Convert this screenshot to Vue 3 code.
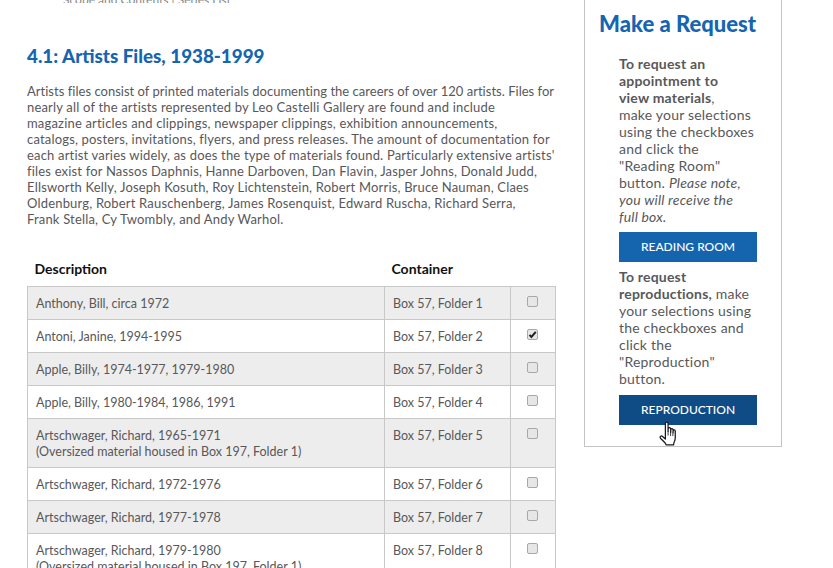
<script setup>
const rows = [
  { desc: 'Anthony, Bill, circa 1972', folder: 'Box 57, Folder 1' },
  { desc: 'Antoni, Janine, 1994-1995', folder: 'Box 57, Folder 2', checked: true },
  { desc: 'Apple, Billy, 1974-1977, 1979-1980', folder: 'Box 57, Folder 3' },
  { desc: 'Apple, Billy, 1980-1984, 1986, 1991', folder: 'Box 57, Folder 4' },
  { desc: 'Artschwager, Richard, 1965-1971', note: '(Oversized material housed in Box 197, Folder 1)', folder: 'Box 57, Folder 5' },
  { desc: 'Artschwager, Richard, 1972-1976', folder: 'Box 57, Folder 6' },
  { desc: 'Artschwager, Richard, 1977-1978', folder: 'Box 57, Folder 7' },
  { desc: 'Artschwager, Richard, 1979-1980', note: '(Oversized material housed in Box 197, Folder 1)', folder: 'Box 57, Folder 8' }
]
</script>

<template>
  <div class="page">
    <main class="content">
      <div class="cut-line"><span>Scope and Contents | Series List</span></div>
      <h2 class="section-title">4.1: Artists Files, 1938-1999</h2>
      <p class="intro">
        Artists files consist of printed materials documenting the careers of over 120 artists. Files for<br>
        nearly all of the artists represented by Leo Castelli Gallery are found and include<br>
        magazine articles and clippings, newspaper clippings, exhibition announcements,<br>
        catalogs, posters, invitations, flyers, and press releases. The amount of documentation for<br>
        each artist varies widely, as does the type of materials found. Particularly extensive artists'<br>
        files exist for Nassos Daphnis, Hanne Darboven, Dan Flavin, Jasper Johns, Donald Judd,<br>
        Ellsworth Kelly, Joseph Kosuth, Roy Lichtenstein, Robert Morris, Bruce Nauman, Claes<br>
        Oldenburg, Robert Rauschenberg, James Rosenquist, Edward Ruscha, Richard Serra,<br>
        Frank Stella, Cy Twombly, and Andy Warhol.
      </p>

      <table class="files">
        <thead>
          <tr>
            <th class="col-desc">Description</th>
            <th class="col-box">Container</th>
            <th class="col-check"></th>
          </tr>
        </thead>
        <tbody>
          <tr v-for="row in rows" :key="row.folder">
            <td>
              {{ row.desc }}
              <template v-if="row.note"><br>{{ row.note }}</template>
            </td>
            <td>{{ row.folder }}</td>
            <td class="check-cell">
              <span class="check">
                <svg v-if="row.checked" viewBox="0 0 11 11" width="11" height="11">
                  <path d="M2.5 5.8 4.4 8 8.8 2.8" fill="none" stroke="#222" stroke-width="2" />
                </svg>
              </span>
            </td>
          </tr>
        </tbody>
      </table>
    </main>

    <aside class="request">
      <h2 class="request-title">Make a Request</h2>
      <div class="request-body">
        <p><strong>To request an<br>appointment to<br>view materials</strong>,<br>make your selections<br>using the checkboxes<br>and click the<br>"Reading Room"<br>button. <em>Please note,<br>you will receive the<br>full box.</em></p>
        <button class="btn">READING ROOM</button>
        <p><strong>To request<br>reproductions,</strong> make<br>your selections using<br>the checkboxes and<br>click the<br>"Reproduction"<br>button.</p>
        <div class="btn-wrap">
          <button class="btn btn-hover">REPRODUCTION</button>
          <svg class="cursor" viewBox="0 0 18 25" width="19" height="26">
            <path d="M6 15V2.6C6 1.6 6.6 1 7.3 1s1.3.6 1.3 1.6V10l.1-2.2c0-.9.6-1.4 1.2-1.4s1.2.5 1.2 1.4V11l.1-2.4c0-.8.5-1.3 1.1-1.3s1.1.5 1.1 1.3v2.6l.1-1.5c0-.7.5-1.1 1-1.1s1 .4 1 1.1v6.2c0 1.6-.3 2.8-.8 3.8-.5 1-.8 2-.8 3.3H6.700c-.3-1.100-.9-1.900-1.800-2.800L1.500 16.800C.9 16.100.8 15.300 1.300 14.800s1.300-.5 2 .1L6 17.300Z" fill="#fff" stroke="#1a1a1a" stroke-width="1.2" stroke-linejoin="round" />
            <path d="M8.6 10v4M11 11v3.5M13.2 11.200v3.300" stroke="#1a1a1a" stroke-width=".8" fill="none" />
          </svg>
        </div>
      </div>
    </aside>
  </div>
</template>

<style>
html, body {
  margin: 0;
  background: #fff;
  overflow: hidden;
}
</style>

<style scoped>
.page {
  width: 833px;
  height: 568px;
  overflow: hidden;
  display: flex;
  align-items: flex-start;
  font-family: Lato, 'Open Sans', sans-serif;
  color: #58585a;
}

.content {
  width: 528px;
  margin-left: 27px;
  flex: none;
}

.cut-line {
  height: 3px;
  overflow: hidden;
  padding-left: 36px;
  font-size: 12px;
  line-height: 0;
  color: #888;
}

.section-title {
  margin: 41px 0 0;
  font-size: 18.8px;
  line-height: 24px;
  font-weight: 900;
  color: #1565b0;
}

.intro {
  margin: 15px 0 0;
  font-size: 13px;
  line-height: 16px;
  letter-spacing: .18px;
  white-space: nowrap;
}

.intro::first-line {
  letter-spacing: .02px;
}

.files {
  margin-top: 27px;
  width: 529px;
  border-collapse: collapse;
  table-layout: fixed;
  font-size: 12.5px;
  line-height: 16px;
}

.files th {
  box-sizing: border-box;
  height: 32px;
  padding: 0 7px 1px;
  text-align: left;
  font-size: 14px;
  font-weight: 700;
  color: #111;
}

.col-desc { width: 357px; }
.col-box { width: 126px; }
.col-check { width: 45px; }

.files td {
  padding: 9px 8px 7px;
  border: 1px solid #c8c8c8;
  vertical-align: top;
}

.files tbody tr:nth-child(odd) td {
  background: #ededed;
}

.check-cell {
  text-align: center;
}

.check {
  display: inline-block;
  width: 9px;
  height: 9px;
  border: 1px solid #a8a8a8;
  border-radius: 2px;
  background: #e6e6e6;
  position: relative;
  top: -1px;
  left: -1px;
}

.check svg {
  display: block;
  margin: -1px;
}

.request {
  width: 198px;
  height: 447px;
  margin-left: 29px;
  flex: none;
  box-sizing: border-box;
  border: 1px solid #c4c4c4;
  border-top: none;
  padding: 11px 24px 0 14px;
}

.request-title {
  margin: 0;
  font-size: 22px;
  line-height: 26px;
  font-weight: 900;
  color: #1565b0;
  white-space: nowrap;
}

.request-body {
  margin: 18px 0 0 20px;
  font-size: 14px;
  line-height: 17px;
  letter-spacing: .2px;
  white-space: nowrap;
}

.request-body p {
  margin: 0;
}

.btn {
  display: block;
  width: 138px;
  height: 30px;
  margin: 7px 0 6px;
  border: none;
  padding: 0 0 2px;
  background: #1565ae;
  color: #fff;
  font-family: inherit;
  font-size: 12px;
  font-weight: 500;
}

.btn-wrap {
  position: relative;
}

.btn-hover {
  margin-top: 8px;
  background: #0f4c85;
}

.cursor {
  position: absolute;
  left: 40px;
  top: 26px;
}
</style>
